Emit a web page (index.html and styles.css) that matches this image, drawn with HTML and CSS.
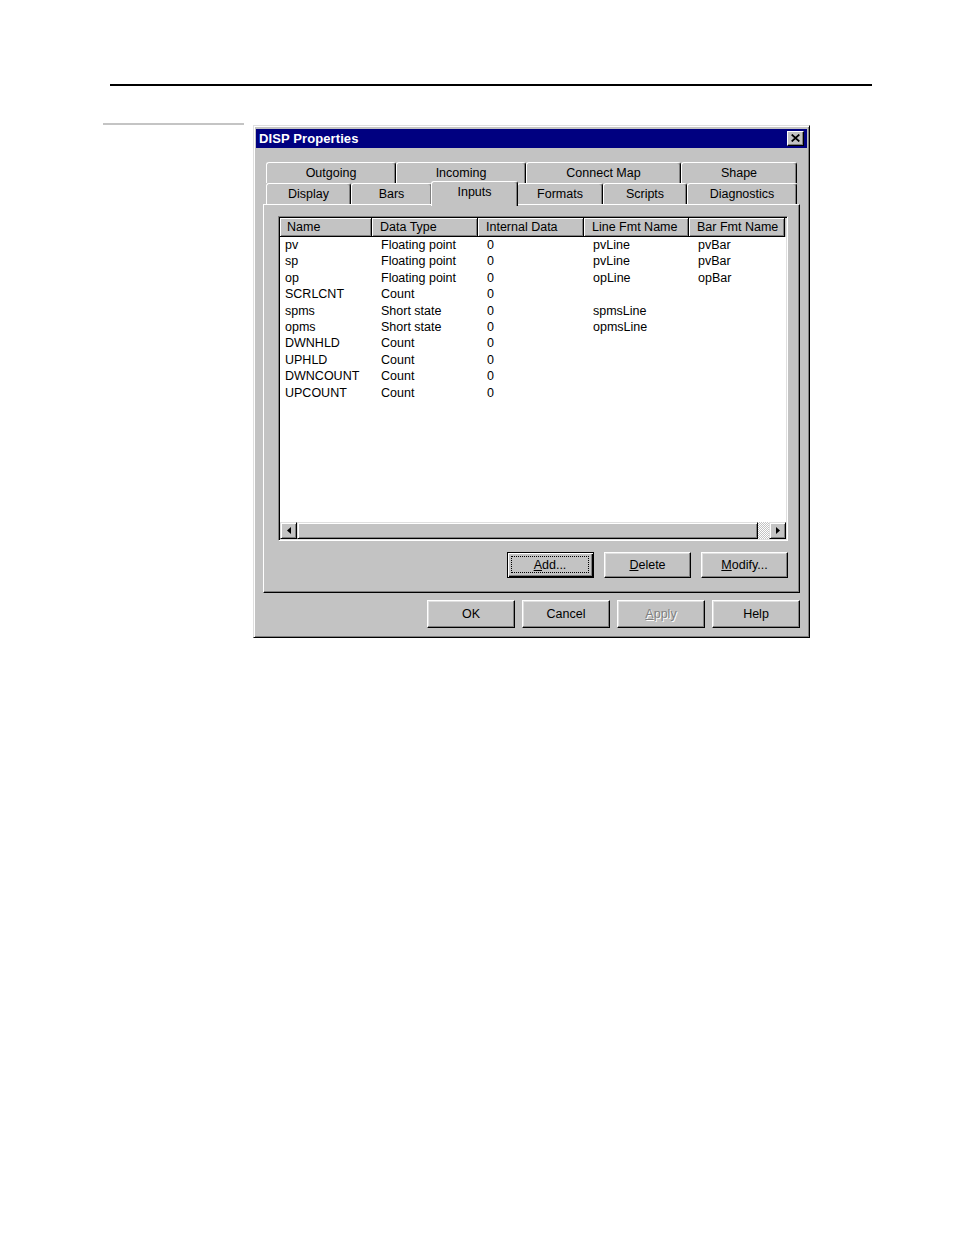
FILE: index.html
```html
<!DOCTYPE html>
<html>
<head>
<meta charset="utf-8">
<title>DISP Properties</title>
<link rel="stylesheet" href="styles.css">
</head>
<body>
<div class="rule"></div>
<div class="stage">
  <div class="side-rule"></div>
  <div class="dialog">
    <div class="titlebar">
      <span class="title">DISP Properties</span>
      <span class="close"><svg width="9" height="8" viewBox="0 0 9 8"><path d="M0.7 0.5 L8.3 7.5 M8.3 0.5 L0.7 7.5" stroke="#000" stroke-width="1.7" fill="none"/></svg></span>
    </div>
    <div class="tabs">
      <div class="tabrow row-back">
        <div class="tab">Outgoing</div>
        <div class="tab">Incoming</div>
        <div class="tab">Connect Map</div>
        <div class="tab">Shape</div>
      </div>
      <div class="tabrow row-front">
        <div class="tab">Display</div>
        <div class="tab">Bars</div>
        <div class="tab active">Inputs</div>
        <div class="tab">Formats</div>
        <div class="tab">Scripts</div>
        <div class="tab">Diagnostics</div>
      </div>
    </div>
    <div class="panel">
      <div class="listview">
        <div class="lv-head lv-grid">
          <div class="hcell first">Name</div>
          <div class="hcell">Data Type</div>
          <div class="hcell">Internal Data</div>
          <div class="hcell">Line Fmt Name</div>
          <div class="hcell">Bar Fmt Name</div>
        </div>
        <div class="lv-body">
          <div class="lv-row lv-grid"><span class="c1">pv</span><span>Floating point</span><span>0</span><span>pvLine</span><span>pvBar</span></div>
          <div class="lv-row lv-grid"><span class="c1">sp</span><span>Floating point</span><span>0</span><span>pvLine</span><span>pvBar</span></div>
          <div class="lv-row lv-grid"><span class="c1">op</span><span>Floating point</span><span>0</span><span>opLine</span><span>opBar</span></div>
          <div class="lv-row lv-grid"><span class="c1">SCRLCNT</span><span>Count</span><span>0</span><span></span><span></span></div>
          <div class="lv-row lv-grid"><span class="c1">spms</span><span>Short state</span><span>0</span><span>spmsLine</span><span></span></div>
          <div class="lv-row lv-grid"><span class="c1">opms</span><span>Short state</span><span>0</span><span>opmsLine</span><span></span></div>
          <div class="lv-row lv-grid"><span class="c1">DWNHLD</span><span>Count</span><span>0</span><span></span><span></span></div>
          <div class="lv-row lv-grid"><span class="c1">UPHLD</span><span>Count</span><span>0</span><span></span><span></span></div>
          <div class="lv-row lv-grid"><span class="c1">DWNCOUNT</span><span>Count</span><span>0</span><span></span><span></span></div>
          <div class="lv-row lv-grid"><span class="c1">UPCOUNT</span><span>Count</span><span>0</span><span></span><span></span></div>
        </div>
        <div class="hscroll">
          <div class="sb-btn"><svg width="4" height="7" viewBox="0 0 4 7"><path d="M4 0 L0 3.5 L4 7 Z" fill="#000"/></svg></div>
          <div class="sb-thumb"></div>
          <div class="sb-track"></div>
          <div class="sb-btn"><svg width="4" height="7" viewBox="0 0 4 7"><path d="M0 0 L4 3.5 L0 7 Z" fill="#000"/></svg></div>
        </div>
      </div>
      <div class="btnrow panel-btns">
        <button class="btn default"><span class="focus"><u>A</u>dd...</span></button>
        <button class="btn"><span class="lbl"><u>D</u>elete</span></button>
        <button class="btn"><span class="lbl"><u>M</u>odify...</span></button>
      </div>
    </div>
    <div class="btnrow dlg-btns">
      <button class="btn"><span class="lbl">OK</span></button>
      <button class="btn"><span class="lbl">Cancel</span></button>
      <button class="btn disabled"><span class="lbl"><u>A</u>pply</span></button>
      <button class="btn"><span class="lbl">Help</span></button>
    </div>
  </div>
</div>
</body>
</html>
```

FILE: styles.css
```css
html, body {
  margin: 0;
  padding: 0;
  background: #fff;
}
body {
  font-family: "Liberation Sans", Arial, sans-serif;
  font-size: 12.5px;
  color: #000;
}

.rule {
  margin: 84px 0 0 110px;
  width: 762px;
  height: 2px;
  background: #000;
}

.stage {
  display: flex;
  align-items: flex-start;
  margin-top: 37px;
}
.side-rule {
  margin-left: 103px;
  width: 141px;
  height: 2px;
  background: #c4c4c4;
}

.dialog {
  margin-left: 9px;
  margin-top: 2px;
  width: 557px;
  height: 513px;
  box-sizing: border-box;
  background: #c3c3c3;
  border: 1px solid;
  border-color: #dfdfdf #000 #000 #dfdfdf;
  box-shadow: inset 1px 1px #fff, inset -1px -1px #808080;
  padding: 3px 2px 2px 2px;
  display: flex;
  flex-direction: column;
}

.titlebar {
  height: 19px;
  background: #000080;
  color: #fff;
  display: flex;
  align-items: center;
  justify-content: space-between;
  padding: 0 3px 0 3px;
}
.title {
  font-weight: bold;
  font-size: 13px;
  letter-spacing: 0.1px;
}
.close {
  width: 17px;
  height: 15px;
  box-sizing: border-box;
  background: #c3c3c3;
  border: 1px solid;
  border-color: #fff #000 #000 #fff;
  box-shadow: inset -1px -1px #808080;
  display: flex;
  align-items: center;
  justify-content: center;
}
.close svg { display: block; margin: 0 1px 1px 0; }

/* Tabs */
.tabs {
  margin: 14px 10px 0 10px;
  position: relative;
  z-index: 2;
}
.tabrow {
  display: grid;
  height: 21px;
}
.row-back {
  grid-template-columns: 130px 130px 155px 116px;
}
.row-front {
  grid-template-columns: 85px 81px 85px 86px 84px 110px;
}
.tab {
  box-sizing: border-box;
  background: #c3c3c3;
  border-top: 1px solid #fff;
  border-left: 1px solid #fff;
  border-right: 1px solid #000;
  box-shadow: inset -1px 0 #808080;
  border-radius: 3px 3px 0 0;
  display: flex;
  align-items: center;
  justify-content: center;
  white-space: nowrap;
}
.tab.active {
  margin: -2px -1px -2px -1px;
  padding-bottom: 4px;
  position: relative;
  z-index: 3;
}

/* Panel */
.panel {
  margin: 0 7px;
  height: 389px;
  box-sizing: border-box;
  border: 1px solid;
  border-color: #fff #000 #000 #fff;
  box-shadow: inset -1px -1px #808080;
  padding: 11px 11px 0 14px;
  display: flex;
  flex-direction: column;
}

.listview {
  height: 325px;
  box-sizing: border-box;
  border: 1px solid;
  border-color: #808080 #fff #fff #808080;
  padding: 1px;
  box-shadow: inset 1px 1px #000, inset -1px -1px #dfdfdf;
  display: flex;
  flex-direction: column;
}
.lv-grid {
  display: grid;
  grid-template-columns: 92px 106px 106px 105px 96px;
}
.lv-head {
  height: 19px;
  background: #c3c3c3;
}
.hcell {
  box-sizing: border-box;
  border-right: 1px solid #000;
  border-bottom: 1px solid #000;
  box-shadow: inset 1px 1px #fff, inset -1px -1px #808080;
  padding-left: 8px;
  display: flex;
  align-items: center;
  white-space: nowrap;
  overflow: hidden;
}
.hcell.first { padding-left: 7px; }

.lv-body {
  flex: 1;
  background: #fff;
}
.lv-row {
  height: 16.4px;
  line-height: 16.4px;
}
.lv-row span {
  padding-left: 9px;
  white-space: nowrap;
}
.lv-row span.c1 { padding-left: 5px; }

.hscroll {
  height: 17px;
  display: flex;
  background: #fff;
}
.sb-btn, .sb-thumb {
  box-sizing: border-box;
  background: #c3c3c3;
  border: 1px solid;
  border-color: #dfdfdf #000 #000 #dfdfdf;
  box-shadow: inset 1px 1px #fff, inset -1px -1px #808080;
}
.sb-btn {
  width: 17px;
  display: flex;
  align-items: center;
  justify-content: center;
}
.sb-btn svg { display: block; }
.sb-thumb {
  flex: 1;
}
.sb-track {
  width: 11px;
  background-color: #fff;
  background-image: repeating-conic-gradient(#c3c3c3 0 25%, #fff 0 50%);
  background-size: 2px 2px;
}

/* Buttons */
.btnrow {
  display: flex;
  justify-content: flex-end;
}
.panel-btns {
  margin-top: 11px;
  gap: 10px;
}
.dlg-btns {
  margin: 7px 7px 0 0;
  gap: 7px;
}
.btn {
  font-family: "Liberation Sans", Arial, sans-serif;
  font-size: 12.5px;
  color: #000;
  margin: 0;
  padding: 0;
  box-sizing: border-box;
  background: #c3c3c3;
  border: 1px solid;
  border-color: #fff #000 #000 #fff;
  box-shadow: inset -1px -1px #808080, inset 1px 1px #dfdfdf;
  display: flex;
  align-items: stretch;
  justify-content: center;
}
.panel-btns .btn {
  width: 87px;
  height: 26px;
}
.dlg-btns .btn {
  width: 88px;
  height: 28px;
}
.btn .lbl {
  display: flex;
  align-items: center;
  justify-content: center;
  flex: 1;
}
.btn.default {
  border-color: #000;
  box-shadow: inset 1px 1px #fff, inset -1px -1px #000, inset -2px -2px #808080;
  padding: 3px 4px 4px 3px;
}
.btn .focus {
  flex: 1;
  display: flex;
  align-items: center;
  justify-content: center;
  border: 1px dotted #000;
}
.btn u { text-decoration: underline; text-underline-offset: 1px; }
.btn.disabled .lbl {
  color: #808080;
  text-shadow: 1px 1px #fff;
}
```
